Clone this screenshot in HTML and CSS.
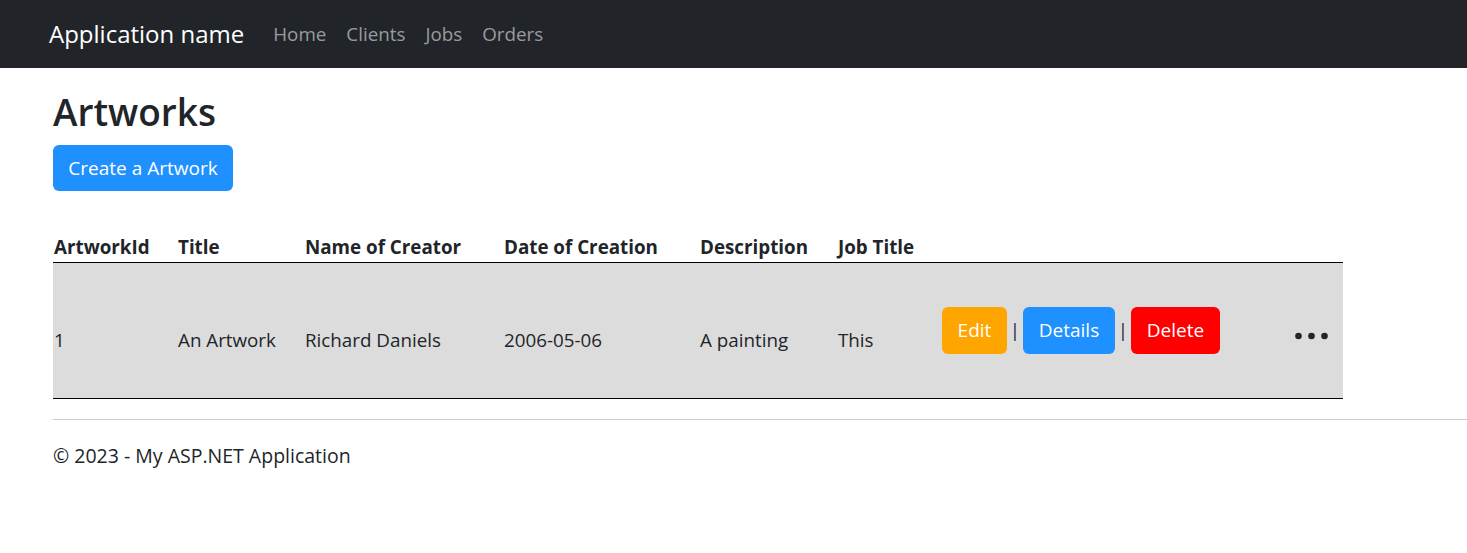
FILE: index.html
```html
<!DOCTYPE html>
<html>
<head>
<meta charset="utf-8">
<title>Artworks</title>
<link rel="stylesheet" href="styles.css">
</head>
<body>
<header class="navbar">
  <a class="brand" href="#">Application name</a>
  <nav class="nav">
    <a href="#">Home</a>
    <a href="#">Clients</a>
    <a href="#">Jobs</a>
    <a href="#">Orders</a>
  </nav>
</header>
<main class="content">
  <h1 class="title">Artworks</h1>
  <a class="btn btn-create" href="#">Create a Artwork</a>
  <table class="table">
    <thead>
      <tr>
        <th class="c1">ArtworkId</th>
        <th class="c2">Title</th>
        <th class="c3">Name of Creator</th>
        <th class="c4">Date of Creation</th>
        <th class="c5">Description</th>
        <th class="c6">Job Title</th>
        <th class="c7"></th>
        <th class="c8"></th>
      </tr>
    </thead>
    <tbody>
      <tr>
        <td class="first">1</td>
        <td>An Artwork</td>
        <td>Richard Daniels</td>
        <td>2006-05-06</td>
        <td>A painting</td>
        <td>This</td>
        <td class="actions">
          <a class="btn btn-edit" href="#">Edit</a><span class="sep">|</span><a class="btn btn-details" href="#">Details</a><span class="sep">|</span><a class="btn btn-delete" href="#">Delete</a>
        </td>
        <td class="more">
          <svg class="dots" width="33" height="8" viewBox="0 0 33 8"><circle cx="3.5" cy="4" r="3.3" fill="#212529"/><circle cx="16.5" cy="4" r="3.3" fill="#212529"/><circle cx="29.5" cy="4" r="3.3" fill="#212529"/></svg>
        </td>
      </tr>
    </tbody>
  </table>
</main>
<footer class="footer">
  <div class="footer-text">&copy; 2023 - My ASP.NET Application</div>
</footer>
</body>
</html>
```

FILE: styles.css
```css
* { box-sizing: border-box; }
body {
  margin: 0;
  font-family: "Open Sans", "Noto Sans", sans-serif;
  color: #212529;
  background: #fff;
  font-size: 19px;
}
a { text-decoration: none; }

.navbar {
  height: 68px;
  background: #212529;
  display: flex;
  align-items: center;
  padding-left: 49px;
}
.brand {
  color: #fff;
  font-size: 24px;
  margin-right: 29px;
  padding-bottom: 1px;
}
.nav { display: flex; gap: 20px; padding-bottom: 1px; }
.nav a {
  color: rgba(255,255,255,.55);
  font-size: 18.8px;
}

.content { padding: 0 124px 0 53px; }
.title {
  margin: 22px 0 11px;
  font-size: 37px;
  font-weight: 600;
  line-height: 44px;
}
.btn {
  display: inline-block;
  color: #fff;
  border-radius: 6px;
  line-height: 47px;
  height: 47px;
  padding: 0 16px;
}
.btn-create {
  background: #1e90ff;
  font-size: 19px;
  height: 46px;
  line-height: 46px;
  width: 180px;
  text-align: center;
  padding: 0;
}

.table {
  margin-top: 40px;
  width: 1290px;
  border-collapse: collapse;
}
.table th {
  text-align: left;
  font-weight: 700;
  font-size: 18.8px;
  padding: 0 0 2px;
  height: 31px;
  border-bottom: 1px solid #000;
  vertical-align: bottom;
  line-height: 1.3;
}
.table th.c1 { padding-left: 1px; }
.table td {
  background: #dcdcdc;
  height: 136px;
  padding: 20px 0 0;
  font-size: 18.8px;
  border-bottom: 1px solid #000;
  vertical-align: middle;
}
.table td.first { padding-left: 1px; }
.c1 { width: 125px; }
.c2 { width: 127px; }
.c3 { width: 199px; }
.c4 { width: 196px; }
.c5 { width: 138px; }
.c6 { width: 104px; }
.c7 { width: 345px; }
.table td.actions { padding: 0; white-space: nowrap; }
.actions .btn { font-size: 19px; }
.sep { display: inline-block; width: 16px; text-align: center; color: #1a2340; }
.btn-edit { background: #ffa500; width: 65px; padding: 0; text-align: center; }
.btn-details { background: #1e90ff; width: 92px; padding: 0; text-align: center; }
.btn-delete { background: #ff0000; width: 89px; padding: 0; text-align: center; }
.table td.more { padding: 12px 0 0 8px; }
.dots { display: block; }

.footer {
  margin-top: 20px;
  margin-left: 53px;
  border-top: 1px solid #ccc;
}
.footer-text {
  padding-top: 22px;
  font-size: 19.5px;
}
```
